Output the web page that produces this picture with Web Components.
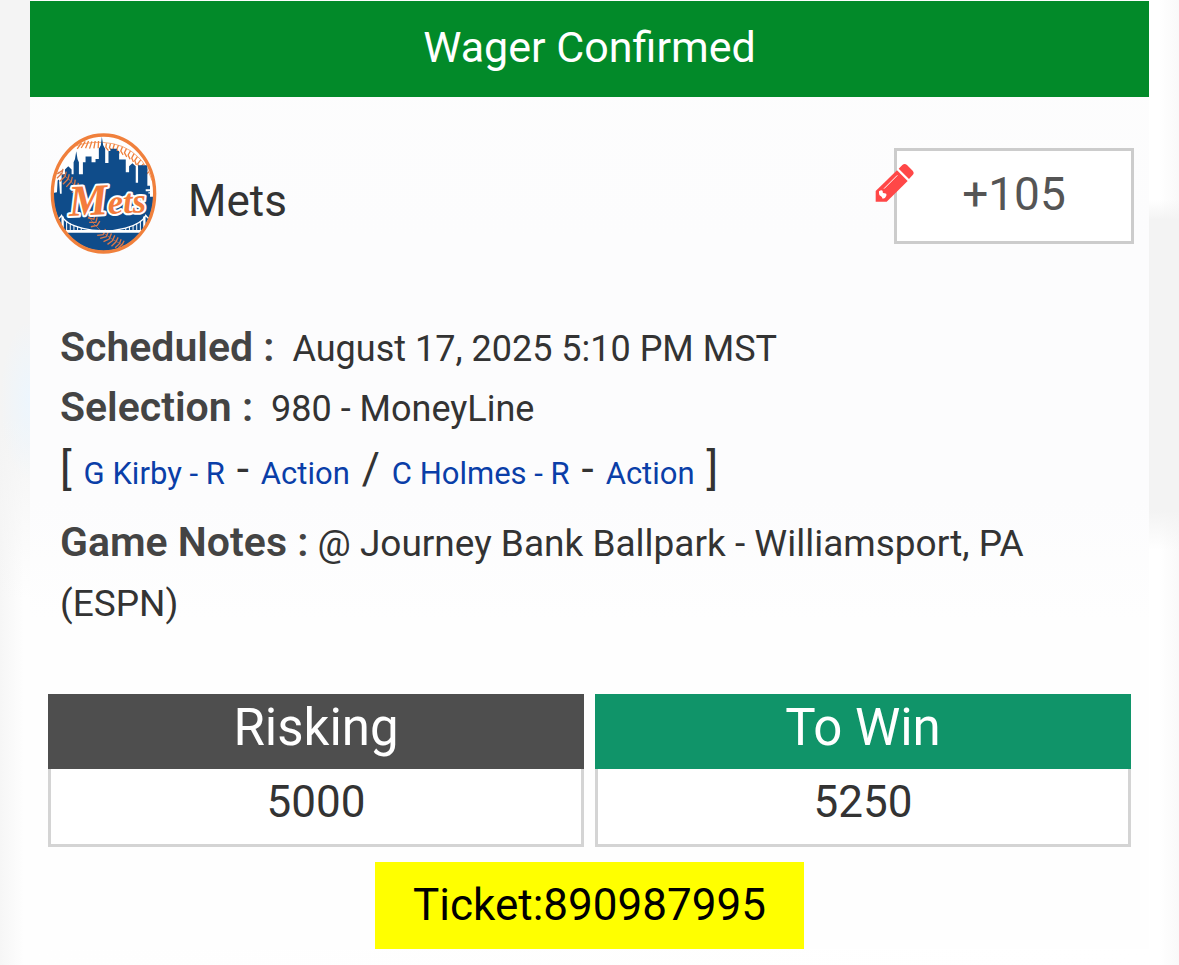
<!DOCTYPE html>
<html lang="en">
<head>
<meta charset="utf-8">
<title>Wager Confirmed</title>
<style>
body {
  margin: 0;
  min-height: 100vh;
  font-family: Roboto, "Liberation Sans", sans-serif;
  color: #333;
  background:
    radial-gradient(closest-side, #edf6fd, transparent) 0 320px / 60px 160px no-repeat,
    linear-gradient(#f4f4f4 420px, transparent) left top / 30px 600px no-repeat,
    linear-gradient(transparent, #f3f3f3 20px, #f3f3f3 310px, transparent) right 200px / 30px 350px no-repeat,
    linear-gradient(to right, #f6f6f6, #fefefe 24px, #fff calc(100% - 20px), #f9f9f9);
}
</style>
</head>
<body>
<wager-ticket heading="Wager Confirmed">
  <wager-team slot="team" name="Mets" odds="+105"></wager-team>
  <wager-details slot="details"></wager-details>
  <wager-amount slot="amount" label="Risking">5000</wager-amount>
  <wager-amount slot="amount" label="To Win" class="win">5250</wager-amount>
  <span slot="ticket">Ticket:890987995</span>
</wager-ticket>

<script>
const ticketTemplate = document.createElement('template');
ticketTemplate.innerHTML = `
<style>
:host {
  display: block;
  margin: 0 30px;
  padding-top: 1px;
  background: linear-gradient(#fdfdfd, #fcfcfd 240px, #fcfcfd 500px, #fefefe 620px);
}
h1 {
  margin: 0;
  font-size: 43px;
  font-weight: 400;
  line-height: 92px;
  padding-bottom: 4px;
  text-align: center;
  color: #fff;
  background: #028a29;
}
.amounts {
  display: grid;
  grid-template-columns: 1fr 1fr;
  gap: 11px;
  padding: 0 18px;
}
.ticket {
  display: table;
  margin: 15px auto 0;
  padding: 0 38px;
  font-size: 44px;
  line-height: 87px;
  color: #000;
  background: #ff0;
}
</style>
<h1></h1>
<slot name="team"></slot>
<slot name="details"></slot>
<div class="amounts"><slot name="amount"></slot></div>
<div class="ticket"><slot name="ticket"></slot></div>
`;

class WagerTicket extends HTMLElement {
  constructor() {
    super();
    this.attachShadow({ mode: 'open' });
    this.shadowRoot.appendChild(ticketTemplate.content.cloneNode(true));
  }

  connectedCallback() {
    this.shadowRoot.querySelector('h1').textContent = this.getAttribute('heading');
  }
}
window.customElements.define('wager-ticket', WagerTicket);

const logoTemplate = document.createElement('template');
logoTemplate.innerHTML = `
<style>
:host {
  display: block;
  width: 107px;
  height: 121px;
}
svg {
  display: block;
  width: 100%;
  height: 100%;
}
text {
  font-family: "Liberation Serif", serif;
  font-style: italic;
  font-weight: 700;
}
</style>
<svg viewBox="30 22 322 364" role="img" aria-label="Mets logo">
  <defs>
    <clipPath id="ball"><ellipse cx="191" cy="204" rx="151" ry="173"/></clipPath>
  </defs>
  <ellipse cx="191" cy="204" rx="155" ry="177" fill="#fff"/>
  <g clip-path="url(#ball)">
    <!-- top seam -->
    <g fill="none" stroke="#f0803c" stroke-width="4">
      <path d="M108 61q30 -12 80 -11q68 4 106 43q26 22 43 72" stroke-width="2"/>
      <path d="M112 70l13 -19M124 67l12 -20M137 68l9 -22M149 69l7 -22M162 68l4 -22M175 68l1 -22M200 53l-2 12l8 10M212 54l-3 12l8 11M224 55l-4 13l8 11M236 59l-5 12l8 12M248 63l-5 13l7 12M260 69l-6 12l7 13M272 76l-7 12l6 13M283 84l-7 13l5 12M293 93l-8 12l5 13M303 103l-9 12l5 12M312 114l-10 11l4 13M320 126l-10 11l3 12M327 139l-10 10l3 12"/>
    </g>
    <!-- skyline -->
    <path fill="#0f4c8a" d="M30 202h13l8 -2l2 -35l4 -3l3 43h5v-59h10v-14l10 -10l10 10v14h6v-36l4 -9l4 -24l4 24l4 9v36h12v-36h8v-17h18v17h12v-10h10v-31l6 -10l3 -26l4 26l6 10v43h10v-36h6v-7h19v7h7v26h20v38h10v-18l10 -9l10 9v50h7v-53h28v62h8v33h10v12h21v190h-322z"/>
    <path fill="#fff" d="M318 191h17v6h-17zM326 200h8v4h-8z"/>
    <!-- lower seam -->
    <g fill="none" stroke="#d9774a" stroke-width="4">
      <path d="M52 145l15 -10M51 158l15 -15l3 -13M59 168l16 -15l4 -15M69 176l15 -15l4 -15M79 184l15 -16l3 -14M89 191l15 -15l2 -14M96 201l18 -12l1 -17M102 212l19 -9l-1 -17M144 277l18 4l4 -17M148 291l20 0l4 -15M153 304l19 -4l8 -13M172 330l18 -2l7 -17M181 339l18 -5l7 -16M191 349l17 -8l7 -17M203 357l15 -11l7 -16M215 363l13 -13l7 -14M226 367l13 -12l5 -13M236 368l12 -12l5 -10"/>
      <path d="M50 137q45 20 70 68M145 270q25 50 107 91" stroke-width="2"/>
    </g>
    <!-- bridge -->
    <g fill="none" stroke="#fff">
      <path d="M34 318h314" stroke-width="8"/>
      <path d="M36 286q18 1 29 -16q10 25 64 39q31 8 62 7q32 1 66 -8q49 -13 61 -38q10 15 29 16" stroke-width="4"/>
      <path d="M68 273v42M314 273v42" stroke-width="7"/>
      <path d="M47 287v28M57 284v31M80 288v27M91 294v21M102 300v15M113 304v11M124 308v8M258 308v8M269 304v11M280 300v15M291 295v20M302 288v27M325 284v31M335 287v28" stroke-width="3"/>
    </g>
  </g>
  <ellipse cx="191" cy="204" rx="154" ry="176" fill="none" stroke="#f0803c" stroke-width="10"/>
  <text x="88" y="272" font-size="104" transform="rotate(-3 88 272)" fill="#f47c3c" stroke="#fff" stroke-width="12" stroke-linejoin="round" paint-order="stroke"><tspan font-size="132">M</tspan>ets</text>
</svg>
`;

class TeamLogo extends HTMLElement {
  constructor() {
    super();
    this.attachShadow({ mode: 'open' });
    this.shadowRoot.appendChild(logoTemplate.content.cloneNode(true));
  }
}
window.customElements.define('team-logo', TeamLogo);

const teamTemplate = document.createElement('template');
teamTemplate.innerHTML = `
<style>
:host {
  display: flex;
  align-items: flex-start;
  padding: 36px 15px 65px 20px;
}
.name {
  flex: 1;
  margin: 0;
  padding: 36px 0 0 31px;
  font-size: 44px;
  font-weight: 400;
  line-height: 64px;
}
.odds {
  position: relative;
  margin-top: 15px;
}
input {
  box-sizing: border-box;
  display: block;
  width: 240px;
  height: 96px;
  padding: 0 0 4px;
  border: 3px solid #ccc;
  border-radius: 0;
  outline: none;
  background: #fff;
  color: #555;
  font: 46px Roboto, "Liberation Sans", sans-serif;
  text-align: center;
}
svg {
  position: absolute;
  left: -19px;
  top: 15px;
  width: 40px;
  height: 40px;
}
</style>
<team-logo></team-logo>
<h2 class="name"></h2>
<div class="odds">
  <input type="text" aria-label="Odds" readonly>
  <svg viewBox="0 0 120 120" aria-hidden="true">
    <path fill="#ff4747" d="M66 22l32 32l-63 62h-33v-32z"/>
    <path fill="#ff4747" d="M71 17l11 -11q7 -6 14 0l17 17q6 7 0 13l-11 12z"/>
    <path fill="none" stroke="#fff" stroke-width="3" d="M27 77l40 -40"/>
    <path fill="#fff" d="M12 85q8 -6 11 -1q-1 7 4 7q9 -1 7 7q-2 8 -11 9q-2 -6 -6 -8q-6 -2 -5 -14z"/>
  </svg>
</div>
`;

class WagerTeam extends HTMLElement {
  constructor() {
    super();
    this.attachShadow({ mode: 'open' });
    this.shadowRoot.appendChild(teamTemplate.content.cloneNode(true));
  }

  connectedCallback() {
    this.shadowRoot.querySelector('.name').textContent = this.getAttribute('name');
    this.shadowRoot.querySelector('input').value = this.getAttribute('odds');
  }
}
window.customElements.define('wager-team', WagerTeam);

const detailsTemplate = document.createElement('template');
detailsTemplate.innerHTML = `
<style>
:host {
  display: block;
  padding: 0 60px 60px 30px;
  font-size: 36px;
  line-height: 60px;
}
p {
  margin: 0;
}
b {
  font-size: 41px;
  font-weight: 600;
  line-height: 40px;
  margin-right: 18px;
  color: #444;
}
.pitchers {
  font-size: 44px;
  margin-bottom: 15px;
}
.pitchers span {
  margin: 0 1px;
  font-size: 31px;
  line-height: 30px;
  color: #0a3ea8;
}
.notes {
  font-size: 37px;
}
.notes b {
  margin-right: 0;
}
</style>
<p><b>Scheduled :</b>August 17, 2025 5:10 PM MST</p>
<p><b>Selection :</b>980 - MoneyLine</p>
<p class="pitchers">[ <span>G Kirby - R</span> - <span>Action</span> / <span>C Holmes - R</span> - <span>Action</span> ]</p>
<p class="notes"><b>Game Notes :</b> @ Journey Bank Ballpark - Williamsport, PA <span>(ESPN)</span></p>
`;

class WagerDetails extends HTMLElement {
  constructor() {
    super();
    this.attachShadow({ mode: 'open' });
    this.shadowRoot.appendChild(detailsTemplate.content.cloneNode(true));
  }
}
window.customElements.define('wager-details', WagerDetails);

const amountTemplate = document.createElement('template');
amountTemplate.innerHTML = `
<style>
:host {
  display: block;
  text-align: center;
}
.label {
  font-size: 51px;
  line-height: 67px;
  padding-bottom: 8px;
  color: #fff;
  background: #4e4e4e;
}
:host(.win) .label {
  background: #109469;
}
.value {
  border: 3px solid #d4d4d4;
  border-top: 0;
  padding-bottom: 9px;
  font-size: 44px;
  line-height: 66px;
  background: #fff;
}
</style>
<div class="label"></div>
<div class="value"><slot></slot></div>
`;

class WagerAmount extends HTMLElement {
  constructor() {
    super();
    this.attachShadow({ mode: 'open' });
    this.shadowRoot.appendChild(amountTemplate.content.cloneNode(true));
  }

  connectedCallback() {
    this.shadowRoot.querySelector('.label').textContent = this.getAttribute('label');
  }
}
window.customElements.define('wager-amount', WagerAmount);
</script>
</body>
</html>
